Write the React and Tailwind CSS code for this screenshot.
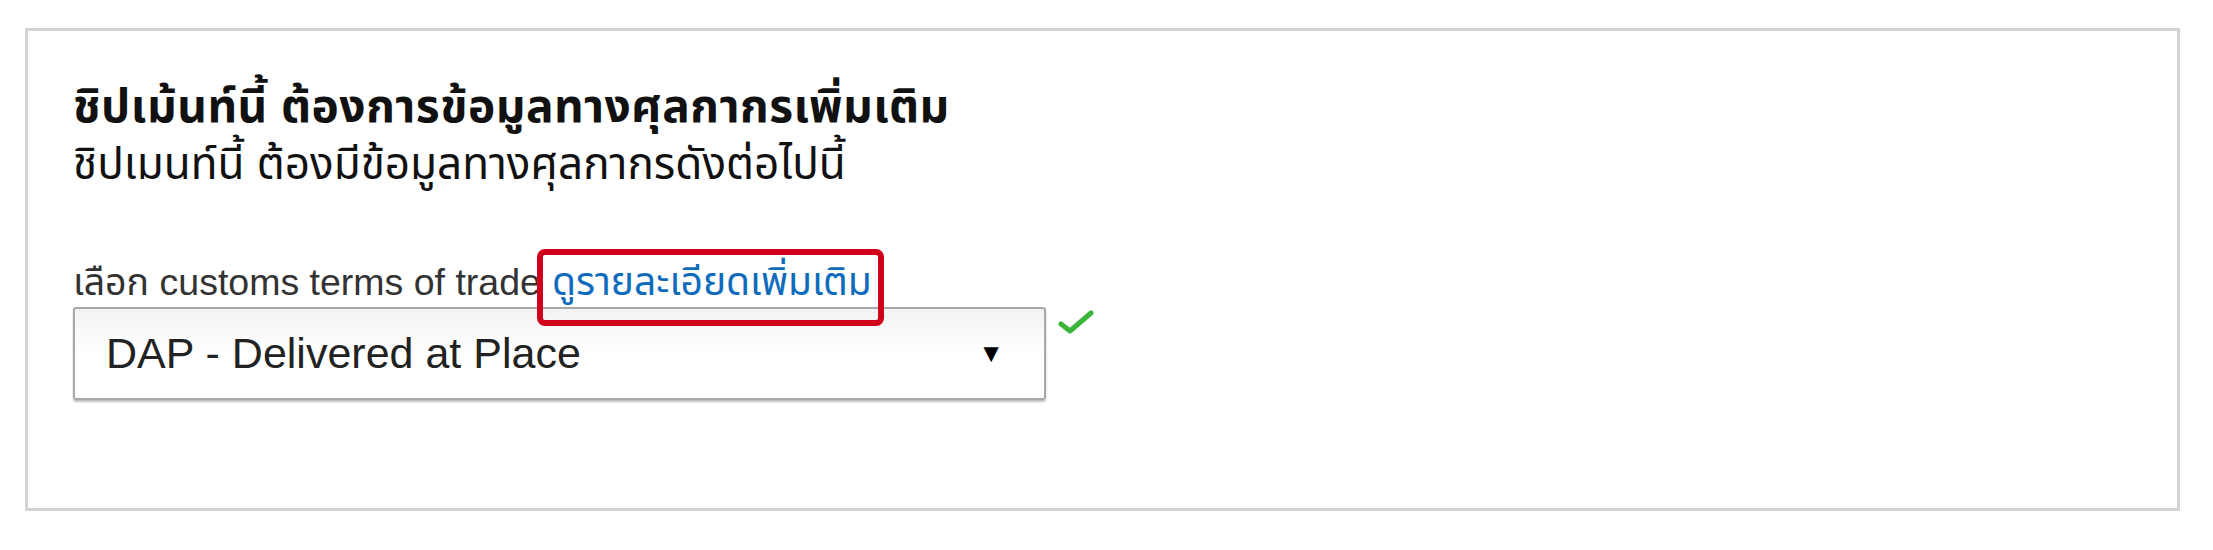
export default function App() {
  return (
    <div className="w-full h-[550px] bg-white pt-[28px] pl-[25px] font-['Liberation_Sans','Noto_Sans_Thai',Tahoma,sans-serif] text-[#222]">
      <div className="w-[2155px] h-[483px] border-[3px] border-[#d3d3d3] bg-white pl-[45px] pt-[46px]">
        <h2 className="text-[46px] font-bold leading-[58px] tracking-[0.5px] text-[#111]">
          ชิปเม้นท์นี้ ต้องการข้อมูลทางศุลกากรเพิ่มเติม
        </h2>
        <p className="text-[44px] leading-[58px] text-[#111]">
          ชิปเมนท์นี้ ต้องมีข้อมูลทางศุลกากรดังต่อไปนี้
        </p>

        <div className="mt-[67px] flex items-center text-[37.5px] leading-[44px] text-[#333]">
          <span>เลือก customs terms of trade</span>
          <span className="relative ml-[11px]">
            <a href="#" className="text-[39px] text-[#0f6cbd]">ดูรายละเอียดเพิ่มเติม</a>
            <span className="absolute -left-[15px] -right-[12px] -top-[11px] -bottom-[22px] border-[6px] border-[#d0021b] rounded-[8px] pointer-events-none" />
          </span>
        </div>

        <div className="mt-[3px] flex items-start">
          <div className="w-[973px] h-[93px] flex items-center justify-between pl-[31px] pr-[40px] border-2 border-[#a8a8a8] rounded-[3px] bg-gradient-to-b from-[#f3f3f3] via-white to-white shadow-[0_2px_2px_rgba(0,0,0,0.25)]">
            <span className="text-[43px] text-[#222]">DAP - Delivered at Place</span>
            <span className="text-[26px] text-black">▼</span>
          </div>
          <svg className="ml-[12px] mt-[2px]" width="36" height="26" viewBox="0 0 36 26">
            <path d="M3 15 L12 22 L33 4" fill="none" stroke="#3cb53c" strokeWidth="5" strokeLinecap="round" strokeLinejoin="round" />
          </svg>
        </div>
      </div>
    </div>
  );
}
